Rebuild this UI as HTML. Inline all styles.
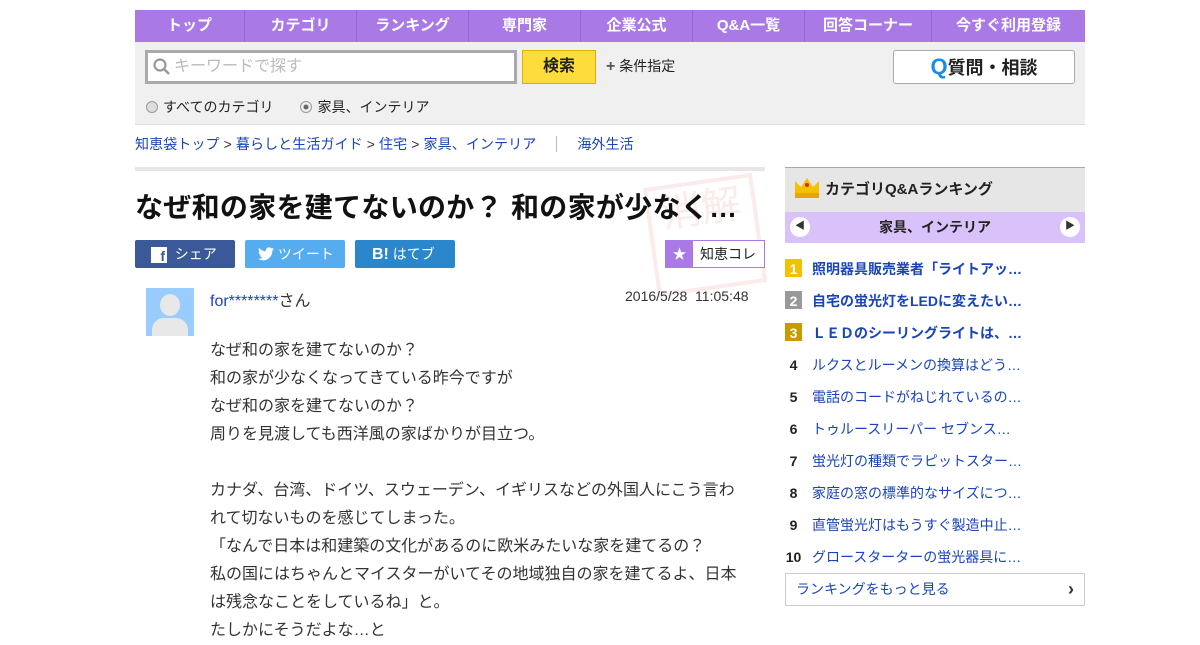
<!DOCTYPE html><html><head><meta charset="utf-8"><style>
*{margin:0;padding:0;box-sizing:border-box}
body{width:1200px;height:630px;overflow:hidden;background:#fff;font-family:"Liberation Sans","Noto Sans CJK JP",sans-serif;color:#333;position:relative}
.a{position:absolute}
.nav{left:135px;top:10px;width:950px;height:32px;background:#a97ae6;display:flex}
.nav div{color:#fff;font-weight:bold;font-size:15px;text-align:center;line-height:32px;border-right:1px solid #9466d6}
.gray{left:135px;top:42px;width:950px;height:83px;background:#f0f0f0;border-bottom:1px solid #ddd}
a,.lk{color:#1a44b8;text-decoration:none}
.sh{top:240px;height:28px;width:100px;color:#fff;font-size:14px;line-height:28px;border-radius:2px}
.body{left:210px;top:337px;font-size:16px;line-height:28px;color:#333;width:532px}
.rk{left:785px;font-size:14px;line-height:20px;font-weight:bold}
.rk span{display:inline-block;width:17px;height:18px;text-align:center;color:#fff;margin-right:10px;font-size:14px}
.rk2{left:785px;font-size:14px;width:300px}
.rk2 b{display:inline-block;width:17px;text-align:center;color:#222;margin-right:10px}
</style></head><body>
<div class="a nav">
<div style="width:110px">トップ</div><div style="width:112px">カテゴリ</div><div style="width:112px">ランキング</div><div style="width:112px">専門家</div><div style="width:112px">企業公式</div><div style="width:112px">Q&amp;A一覧</div><div style="width:127px">回答コーナー</div><div style="width:153px;border:0">今すぐ利用登録</div>
</div>
<div class="a gray"></div>
<div class="a" style="left:145px;top:50px;width:372px;height:34px;border:3px solid #aaa;background:#fff;font-size:16px;color:#bbb;line-height:28px;padding-left:26px">キーワードで探す</div>
<svg class="a" style="left:153px;top:58px" width="18" height="18"><circle cx="7" cy="7" r="5.5" fill="none" stroke="#999" stroke-width="2.2"/><path d="M11 11l5 5" stroke="#999" stroke-width="2.5"/></svg>
<div class="a" style="left:522px;top:50px;width:74px;height:34px;background:#fedc3c;border:1px solid #d9b200;font-weight:bold;font-size:16px;text-align:center;line-height:32px;color:#222">検索</div>
<div class="a" style="left:606px;top:56px;font-size:14px;color:#222"><b style="font-size:16px;color:#555">+</b> 条件指定</div>
<div class="a" style="left:893px;top:50px;width:182px;height:34px;background:#fff;border:1px solid #aaa;border-radius:3px;text-align:center;font-weight:bold;font-size:18px;line-height:32px;color:#222"><span style="color:#1a8ce6;font-size:22px">Q</span>質問・相談</div>
<div class="a" style="left:146px;top:97px;font-size:14px;color:#222"><span style="display:inline-block;width:12px;height:12px;border:1px solid #999;border-radius:50%;background:#ddd;vertical-align:-1px;margin-right:5px"></span>すべてのカテゴリ<span style="display:inline-block;width:12px;height:12px;border:1px solid #999;border-radius:50%;background:radial-gradient(#666 30%,#eee 40%);vertical-align:-1px;margin:0 5px 0 27px"></span>家具、インテリア</div>
<div class="a" style="left:135px;top:134px;font-size:14px;color:#333;letter-spacing:0.1px"><a>知恵袋トップ</a> &gt; <a>暮らしと生活ガイド</a> &gt; <a>住宅</a> &gt; <a>家具、インテリア</a><span style="display:inline-block;width:1px;height:16px;background:#bbb;margin:0 20px;vertical-align:-3px"></span><a>海外生活</a></div>
<div class="a" style="left:135px;top:167px;width:630px;height:4px;background:#e6e6e6"></div>
<div class="a" style="left:650px;top:180px;width:110px;height:110px;border:4px solid rgba(220,90,90,.12);transform:rotate(-8deg);color:rgba(220,90,90,.12);font-size:40px;text-align:center;line-height:50px">消解</div>
<div class="a" style="left:135px;top:186px;font-size:28px;font-weight:bold;color:#111;white-space:nowrap;letter-spacing:0.3px">なぜ和の家を建てないのか？ 和の家が少なく…</div>
<div class="a sh" style="left:135px;background:#3b5998;padding-left:16px"><b style="display:inline-block;width:16px;height:16px;background:#fff;color:#3b5998;font-size:14px;line-height:18px;text-align:right;vertical-align:-2px;padding-right:2px">f</b>&nbsp;&nbsp;シェア</div>
<div class="a sh" style="left:245px;background:#55acee;padding-left:13px"><svg width="16" height="14" style="vertical-align:-2px" viewBox="0 0 24 20"><path d="M24 2.4a10 10 0 0 1-2.8.8A5 5 0 0 0 23.3.4a10 10 0 0 1-3.1 1.2A4.9 4.9 0 0 0 11.8 6 14 14 0 0 1 1.7.9a4.9 4.9 0 0 0 1.5 6.6A4.900 4.900 0 0 1 1 6.900 4.900 4.900 0 0 0 4.900 11.800a5 5 0 0 1-2.2.1 4.900 4.900 0 0 0 4.600 3.400A9.900 9.900 0 0 1 0 17.300 14 14 0 0 0 7.500 19.500c9.100 0 14-7.500 14-14v-.6A10 10 0 0 0 24 2.400z" fill="#fff"/></svg> ツイート</div>
<div class="a sh" style="left:355px;background:#2b87cc;padding-left:17px"><b style="font-size:16px">B!</b> はてブ</div>
<div class="a" style="left:665px;top:240px;width:100px;height:28px;border:1px solid #a97ae6;background:#fff;font-size:14px;line-height:26px;color:#222"><span style="display:inline-block;width:27px;height:26px;background:#a97ae6;color:#fff;text-align:center;margin-right:7px">★</span>知恵コレ</div>
<div class="a" style="left:146px;top:288px;width:48px;height:48px;background:#99ccff;overflow:hidden"><div class="a" style="left:14px;top:6px;width:20px;height:22px;border-radius:50%;background:#e8e8e8"></div><div class="a" style="left:6px;top:30px;width:36px;height:30px;border-radius:12px 12px 0 0;background:#e8e8e8"></div></div>
<div class="a" style="left:210px;top:287px;font-size:16px"><a>for********</a>さん</div>
<div class="a" style="left:625px;top:288px;font-size:14px;color:#333">2016/5/28&nbsp; 11:05:48</div>
<div class="a body">なぜ和の家を建てないのか？<br>和の家が少なくなってきている昨今ですが<br>なぜ和の家を建てないのか？<br>周りを見渡しても西洋風の家ばかりが目立つ。<br><br>カナダ、台湾、ドイツ、スウェーデン、イギリスなどの外国人にこう言わ<br>れて切ないものを感じてしまった。<br>「なんで日本は和建築の文化があるのに欧米みたいな家を建てるの？<br>私の国にはちゃんとマイスターがいてその地域独自の家を建てるよ、日本<br>は残念なことをしているね」と。<br>たしかにそうだよな…と</div>
<div class="a" style="left:785px;top:167px;width:300px;height:45px;background:#e6e6e6;border-top:1px solid #aaa;font-size:15px;font-weight:bold;line-height:44px;padding-left:40px;color:#222">カテゴリQ&amp;Aランキング</div>
<svg class="a" style="left:795px;top:177px" width="24" height="22"><path d="M0 4l6 6 6-9 6 9 6-6v14H0z" fill="#f5c000"/><rect y="16" width="24" height="5" fill="#e0a800"/><circle cx="12" cy="8" r="2" fill="#d03030"/></svg>
<div class="a" style="left:785px;top:212px;width:300px;height:31px;background:#d9c2fa;text-align:center;font-weight:bold;font-size:14px;line-height:31px;color:#222">家具、インテリア</div>
<div class="a" style="left:790px;top:217px;width:20px;height:20px;border-radius:50%;background:#fff;font-size:10px;text-align:center;line-height:20px;color:#333">◀</div>
<div class="a" style="left:1060px;top:217px;width:20px;height:20px;border-radius:50%;background:#fff;font-size:10px;text-align:center;line-height:20px;color:#333">▶</div>
<div class="a rk" style="top:259px"><span style="background:#f5c000">1</span><a>照明器具販売業者「ライトアッ…</a></div>
<div class="a rk" style="top:291px"><span style="background:#999">2</span><a>自宅の蛍光灯をLEDに変えたい…</a></div>
<div class="a rk" style="top:323px"><span style="background:#c89b00">3</span><a>ＬＥＤのシーリングライトは、…</a></div>
<div class="a rk2" style="top:355px"><b>4</b><a>ルクスとルーメンの換算はどう…</a></div>
<div class="a rk2" style="top:387px"><b>5</b><a>電話のコードがねじれているの…</a></div>
<div class="a rk2" style="top:419px"><b>6</b><a>トゥルースリーパー セブンス…</a></div>
<div class="a rk2" style="top:451px"><b>7</b><a>蛍光灯の種類でラピットスター…</a></div>
<div class="a rk2" style="top:483px"><b>8</b><a>家庭の窓の標準的なサイズにつ…</a></div>
<div class="a rk2" style="top:515px"><b>9</b><a>直管蛍光灯はもうすぐ製造中止…</a></div>
<div class="a rk2" style="top:547px"><b>10</b><a>グロースターターの蛍光器具に…</a></div>
<div class="a" style="left:785px;top:573px;width:300px;height:33px;border:1px solid #ccc;font-size:14px;line-height:31px;padding-left:10px;color:#1a44b8">ランキングをもっと見る<span style="position:absolute;right:10px;color:#333;font-weight:bold;font-size:18px">›</span></div>
</body></html>
